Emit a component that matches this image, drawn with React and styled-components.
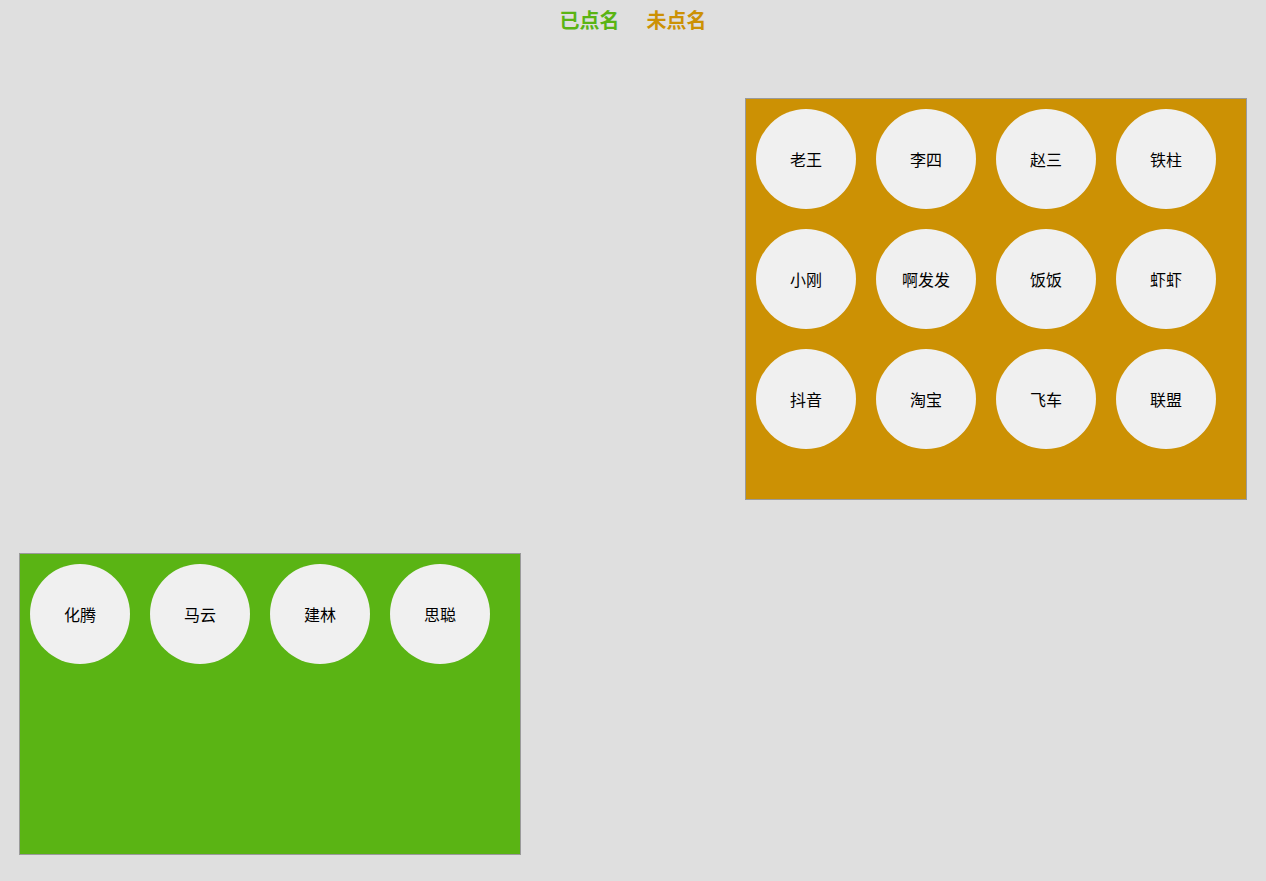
import React from "react";
import styled, { createGlobalStyle } from "styled-components";

const GlobalStyle = createGlobalStyle`
  html, body {
    margin: 0;
    padding: 0;
    background-color: #dfdfdf;
    font-family: "Noto Sans CJK SC", "Noto Sans", sans-serif;
  }
`;

const Page = styled.div`
  width: 1266px;
  min-height: 881px;
  box-sizing: border-box;
  padding: 0 19px;
  display: flex;
  flex-direction: column;
`;

const Header = styled.div`
  display: flex;
  justify-content: center;
  gap: 27px;
  padding-top: 6px;
  height: 92px;
  box-sizing: border-box;
`;

const Tab = styled.span`
  font-size: 20px;
  font-weight: bold;
  line-height: 28px;
  color: ${(p) => p.color};
`;

const Board = styled.div`
  width: 500px;
  height: ${(p) => p.h}px;
  border: 1px solid #9a9a9a;
  background-color: ${(p) => p.bg};
  align-self: ${(p) => p.align};
  margin-top: ${(p) => p.top}px;
  display: flex;
  flex-wrap: wrap;
  align-content: flex-start;
`;

const Person = styled.div`
  width: 100px;
  height: 100px;
  margin: 10px;
  border-radius: 50%;
  background-color: #f0f0f0;
  display: flex;
  align-items: center;
  justify-content: center;
  font-size: 16px;
  color: #000;
`;

const notCalled = [
  "老王", "李四", "赵三", "铁柱",
  "小刚", "啊发发", "饭饭", "虾虾",
  "抖音", "淘宝", "飞车", "联盟",
];

const called = ["化腾", "马云", "建林", "思聪"];

const App = () => {
  return (
    <>
      <GlobalStyle />
      <Page>
        <Header>
          <Tab color="#5ab414">已点名</Tab>
          <Tab color="#cc9104">未点名</Tab>
        </Header>
        <Board bg="#cc9104" h={400} align="flex-end" top={6}>
          {notCalled.map((name) => (
            <Person key={name}>{name}</Person>
          ))}
        </Board>
        <Board bg="#5ab414" h={300} align="flex-start" top={53}>
          {called.map((name) => (
            <Person key={name}>{name}</Person>
          ))}
        </Board>
      </Page>
    </>
  );
};

export default App;
